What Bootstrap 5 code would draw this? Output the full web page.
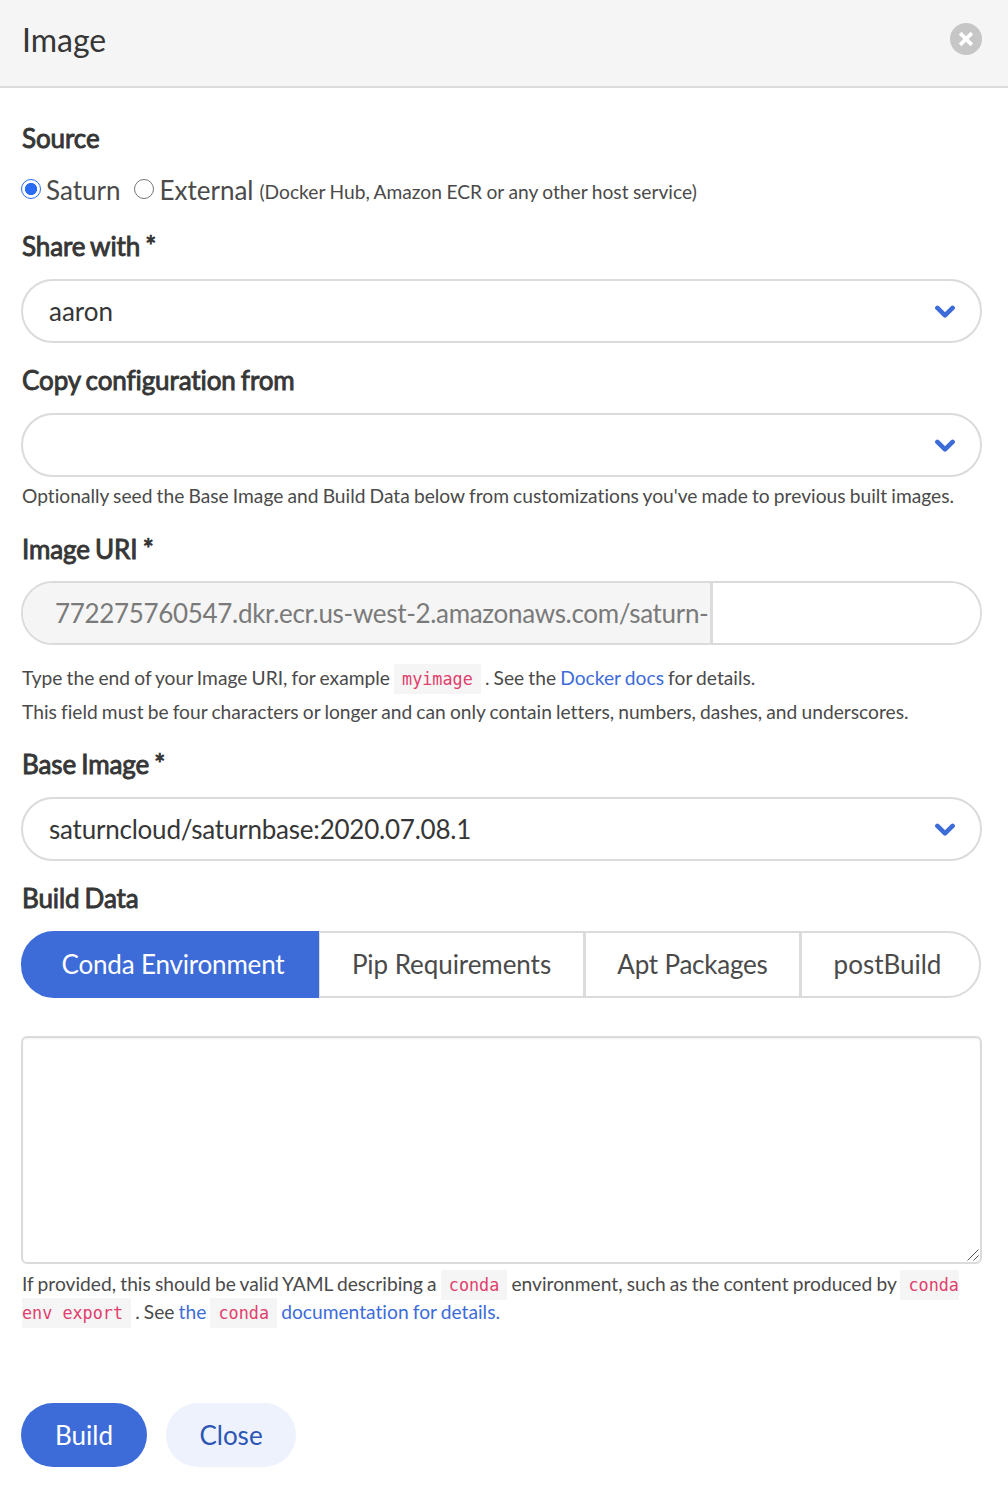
<!DOCTYPE html>
<html lang="en">
<head>
<meta charset="utf-8">
<title>Image</title>
<link href="https://cdn.jsdelivr.net/npm/bootstrap@5.3.0/dist/css/bootstrap.min.css" rel="stylesheet">
<style>
body{font-family:Lato,sans-serif;font-size:26px;line-height:40px;color:#4a4a4a;background:#fff}
.dialog-head{height:88px;background:#f5f5f5;border-bottom:2px solid #dbdbdb;padding:15px 26px 0 22px}
.dialog-title{font-size:32px;line-height:49px;color:#363636;font-weight:400}
.dismiss{width:32px;height:32px;margin-top:8px}
.dialog-body{padding:30px 26px 0 21px}
.field-name{display:block;height:40px;color:#363636;-webkit-text-stroke:.9px #363636;padding-left:1px;margin:0;white-space:nowrap;letter-spacing:-.1px;word-spacing:-1.4px}
.source-row{height:40px;margin-top:11px;white-space:nowrap}
.source-row label{height:40px}
.source-row label span{padding-top:1px}
.source-note{font-size:19.2px;line-height:1;letter-spacing:.01px;word-spacing:-.5px}
.note-wrap{margin-left:6px}
.pick{appearance:none;width:20px;height:20px;border:1px solid #767676;border-radius:50%;margin:0 5px 0 0;flex:none}
.pick:checked{border-color:#2a6df4;background:radial-gradient(circle,#2a6df4 5.7px,#fff 6.4px)}
.hint{font-size:19.2px;line-height:28px;padding-left:1px;margin:0;letter-spacing:.01px;word-spacing:-.8px}
.hint-wide{line-height:34px}
.hint a{color:#3d6cd9;text-decoration:none}
.hint code{font:16.8px/1 "DejaVu Sans Mono",monospace;color:#e0406c;background:#f5f5f5;padding:5px 8px;letter-spacing:0;word-spacing:0}
.pill{height:64px;border:2px solid #dbdbdb;border-radius:32px;padding:0 25px 0 26px;color:#363636}
.pill svg{margin-top:2px}
.tight{letter-spacing:-.22px}
.uri-prefix{width:690px;background:#f5f5f5;color:#7a7a7a;border-right:3px solid #dbdbdb;padding:0 0 0 32px;white-space:nowrap;letter-spacing:-.32px}
.uri-box{height:64px;border:2px solid #dbdbdb;border-radius:32px;overflow:hidden}
.uri-input{border:0;outline:0;min-width:0}
.tab-strip{height:67px;width:960px}
.tab-strip .btn{--bs-btn-font-size:26px;--bs-btn-line-height:40px;--bs-btn-padding-x:0;--bs-btn-padding-y:0;--bs-btn-border-width:2px;--bs-btn-border-color:#dbdbdb;--bs-btn-color:#4a4a4a;--bs-btn-bg:#fff;--bs-btn-border-radius:33px;--bs-btn-active-bg:#3d6cd9;--bs-btn-active-border-color:#3d6cd9;--bs-btn-active-color:#fff;flex:none;white-space:nowrap;padding-bottom:2px}
.tab-strip>.btn:not(:first-child){margin-left:-1px}
.tab-strip .w-conda{width:298px;padding-left:6px;letter-spacing:-.18px}
.tab-strip .w-pip{width:267px;letter-spacing:-.06px}
.tab-strip .w-apt{width:217px;letter-spacing:-.22px}
.tab-strip .w-post{width:181px;padding-right:6px}
.yaml{display:block;height:228px;border:2px solid #dbdbdb;border-radius:6px;resize:none;box-shadow:inset 0 1px 2px rgba(10,10,10,.06)}
.grip{position:absolute;right:3px;bottom:3px}
.action{height:64px;border-radius:32px;border:0;font-size:26px;line-height:40px;padding:0}
.go{width:126px;background:#3d6cd9;color:#fff}
.shut{width:130px;background:#edf2fc;color:#2c55b5}
.gap-5px{margin-top:5px}.gap-6px{margin-top:6px}.gap-12px{margin-top:12px}.gap-13px{margin-top:13px}
.gap-15px{margin-top:15px}.gap-16px{margin-top:16px}.gap-17px{margin-top:17px}.gap-19px{margin-top:19px}
.gap-38px{margin-top:38px}.actions-row{margin-top:77px;gap:19px}
</style>
</head>
<body>
<header class="dialog-head d-flex justify-content-between align-items-start">
  <h1 class="dialog-title mb-0">Image</h1>
  <svg class="dismiss" viewBox="0 0 32 32" role="button" aria-label="Close"><circle cx="16" cy="16" r="16" fill="#c6c6c6"/><path d="M11.4 11.4L20.6 20.6M20.6 11.4L11.4 20.6" stroke="#fff" stroke-width="3.7" stroke-linecap="square"/></svg>
</header>
<main class="dialog-body">
  <div class="field-name">Source</div>
  <div class="source-row d-flex align-items-center">
    <label class="d-flex align-items-center"><input class="pick" type="radio" name="src" checked><span>Saturn</span></label>
    <label class="d-flex align-items-center" style="margin-left:14px"><input class="pick" type="radio" name="src"><span>External</span></label>
    <div class="note-wrap align-self-start"><span class="source-note">(Docker Hub, Amazon ECR or any other host service)</span></div>
  </div>

  <label class="field-name gap-17px">Share with *</label>
  <div class="pill gap-13px d-flex align-items-center justify-content-between"><span>aaron</span>
    <svg width="20" height="14" viewBox="0 0 20 14" fill="none" stroke="#3d6cd9" stroke-width="4.6" stroke-linecap="round" stroke-linejoin="round"><path d="M2.4 2.9L10 10.3L17.6 2.9"/></svg></div>

  <label class="field-name gap-17px">Copy configuration from</label>
  <div class="pill gap-13px d-flex align-items-center justify-content-end">
    <svg width="20" height="14" viewBox="0 0 20 14" fill="none" stroke="#3d6cd9" stroke-width="4.6" stroke-linecap="round" stroke-linejoin="round"><path d="M2.4 2.9L10 10.3L17.6 2.9"/></svg></div>
  <p class="hint gap-5px text-nowrap">Optionally seed the Base Image and Build Data below from customizations you've made to previous built images.</p>

  <label class="field-name gap-19px">Image URI *</label>
  <div class="uri-box gap-12px d-flex"><span class="uri-prefix d-flex align-items-center flex-shrink-0">772275760547.dkr.ecr.us-west-2.amazonaws.com/saturn-</span><input class="uri-input flex-grow-1" type="text" aria-label="Image URI"></div>
  <p class="hint hint-wide gap-16px text-nowrap">Type the end of your Image URI, for example <code>myimage</code> . See the <a href="#">Docker docs</a> for details.<br>This field must be four characters or longer and can only contain letters, numbers, dashes, and underscores.</p>

  <label class="field-name gap-15px">Base Image *</label>
  <div class="pill gap-13px d-flex align-items-center justify-content-between"><span class="tight">saturncloud/saturnbase:2020.07.08.1</span>
    <svg width="20" height="14" viewBox="0 0 20 14" fill="none" stroke="#3d6cd9" stroke-width="4.6" stroke-linecap="round" stroke-linejoin="round"><path d="M2.4 2.9L10 10.3L17.6 2.9"/></svg></div>

  <label class="field-name gap-17px">Build Data</label>
  <div class="tab-strip btn-group gap-13px d-flex">
    <button class="btn active w-conda">Conda Environment</button>
    <button class="btn w-pip">Pip Requirements</button>
    <button class="btn w-apt">Apt Packages</button>
    <button class="btn w-post">postBuild</button>
  </div>
  <div class="position-relative gap-38px">
    <textarea class="yaml w-100" aria-label="Conda Environment"></textarea>
    <svg class="grip" width="12" height="12" viewBox="0 0 12 12" stroke="#555" stroke-width="1"><path d="M.5 11.5L11.5 .5M6.5 11.5L11.5 6.5"/></svg>
  </div>
  <p class="hint gap-6px text-nowrap">If provided, this should be valid YAML describing a <code>conda</code> environment, such as the content produced by <code>conda<br>env export</code> . See <a href="#">the <code>conda</code> documentation for details.</a></p>
  <div class="actions-row d-flex">
    <button class="btn action go">Build</button>
    <button class="btn action shut">Close</button>
  </div>
</main>
<script src="https://cdn.jsdelivr.net/npm/bootstrap@5.3.0/dist/js/bootstrap.bundle.min.js"></script>
</body>
</html>
